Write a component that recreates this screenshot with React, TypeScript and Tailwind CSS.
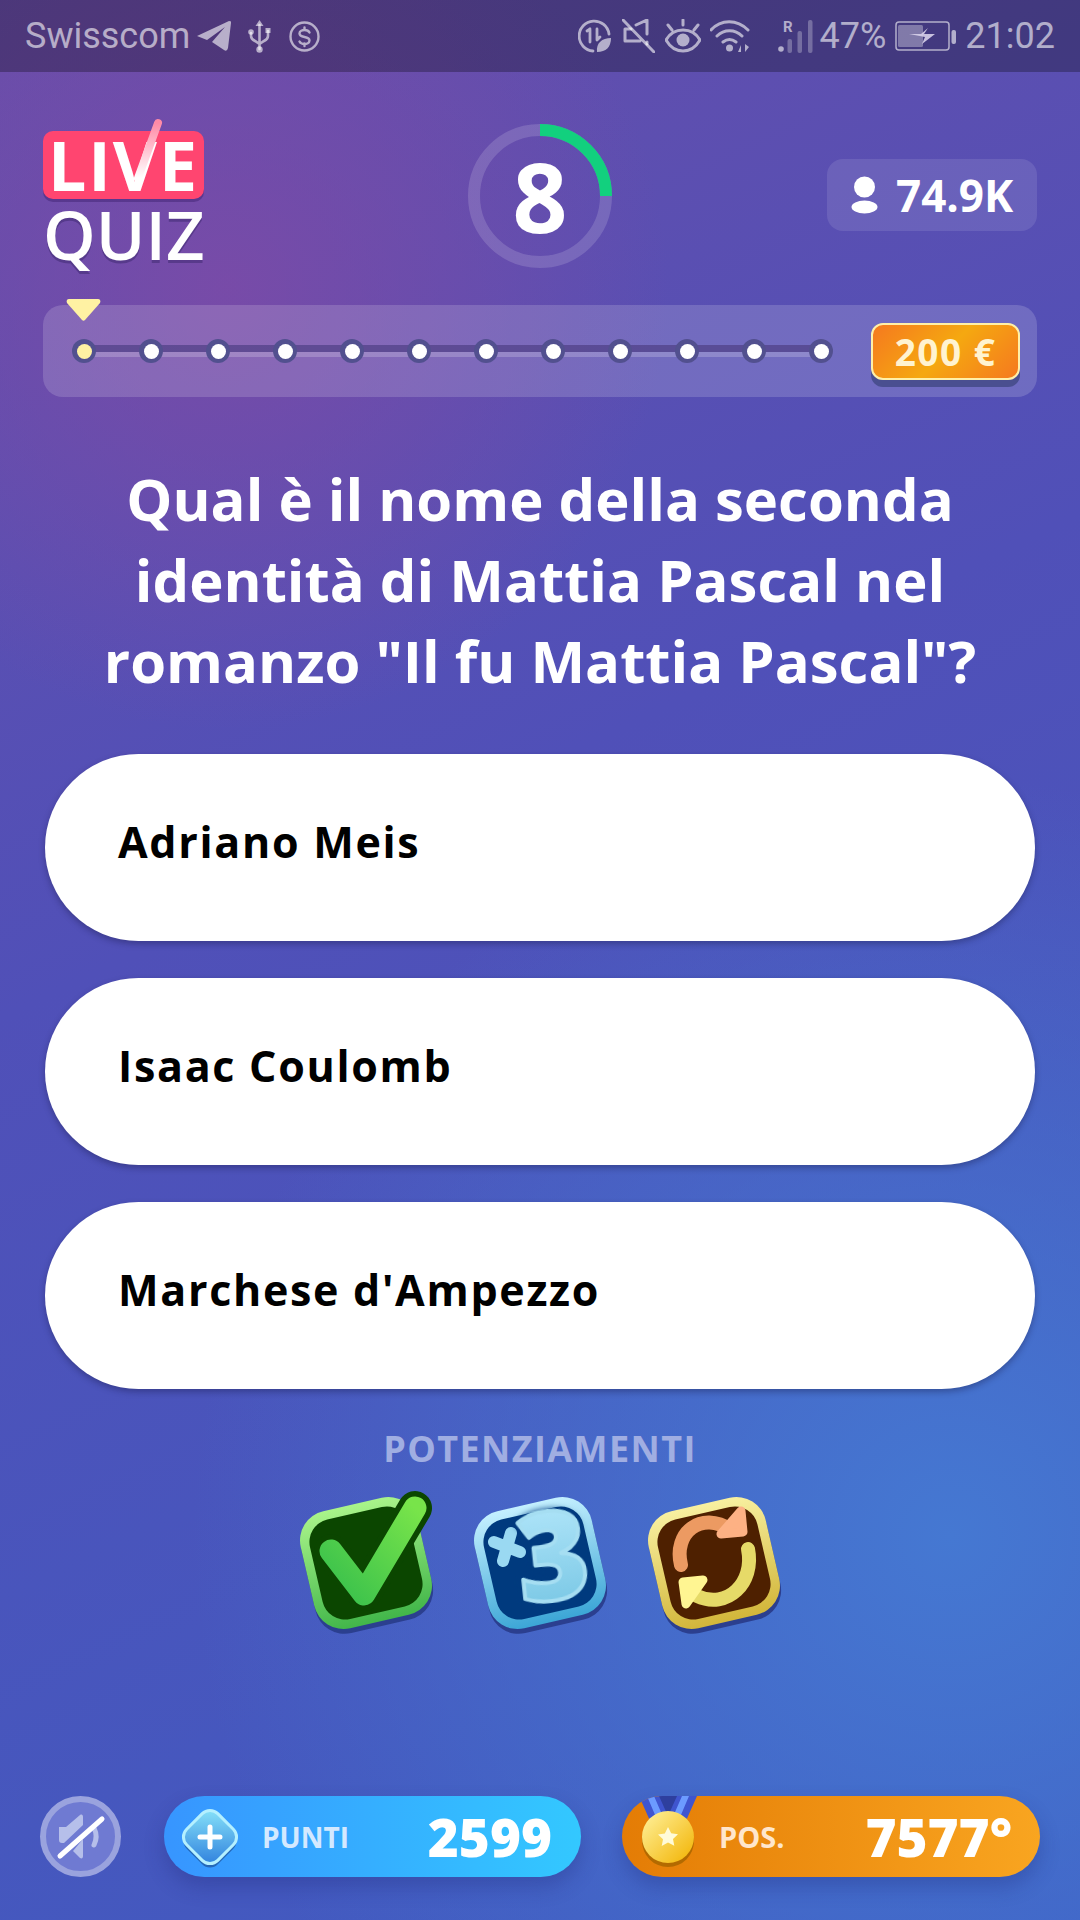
import React from 'react';

const answers = ['Adriano Meis', 'Isaac Coulomb', "Marchese d'Ampezzo"];
const dots = Array.from({ length: 12 }, (_, i) => i);

function Telegram() {
  return (
    <svg width="34" height="30" viewBox="0 0 34 30" fill="currentColor">
      <path d="M0 15 32 0Q35 0 34 2L31 27Q30 31 27 29L15 21 28 6 10 19Z" />
    </svg>
  );
}

function Usb() {
  return (
    <svg width="23" height="33" viewBox="0 0 23 33" fill="none" stroke="currentColor" strokeWidth="2.6" strokeLinecap="round">
      <path d="M11.500 5v24M3 13v3c0 3 2 4 4 5l4.500 3M20 11v5c0 3-2 4-4 5l-4.500 3" />
      <path d="M11.500 0 7.500 6h8z" fill="currentColor" stroke="none" />
      <circle cx="11.500" cy="29.500" r="3.200" fill="currentColor" stroke="none" />
      <circle cx="3" cy="12" r="2.800" fill="currentColor" stroke="none" />
      <rect x="17.500" y="8" width="5" height="5" fill="currentColor" stroke="none" />
    </svg>
  );
}

function Dollar() {
  return (
    <svg width="31" height="31" viewBox="0 0 31 31" fill="none" stroke="currentColor" strokeWidth="2.4" strokeLinecap="round">
      <circle cx="15.500" cy="15.500" r="14" />
      <path d="M20.500 11.500c-1-2-3-2.500-5-2.500s-5 1-5 3.500 2.500 3 5 3.500 5 1 5 3.500-3 3.500-5 3.500-4-.5-5-2.500M15.500 6.500v2.500M15.500 22.500v2.500" />
    </svg>
  );
}

function DataSaver() {
  return (
    <svg width="33" height="34" viewBox="0 0 33 34" fill="none" stroke="currentColor" strokeWidth="2.800" strokeLinecap="round">
      <path d="M15 32A15 15 0 1 1 31 15" />
      <path d="M12 10v13M9 12l3-2M19 10v11M19 21l3-3" />
      <path d="M19 33c-1-9 5-14 14-14 0 9-5 14-14 14z" fill="currentColor" stroke="none" />
    </svg>
  );
}

function Muted() {
  return (
    <svg width="33" height="34" viewBox="0 0 33 34" fill="none" stroke="currentColor" strokeWidth="3" strokeLinecap="round" strokeLinejoin="round">
      <path d="M9 10H3v12h7l8 0M14 6l11-5v14M25 23v2" />
      <path d="M1 1l31 32" />
    </svg>
  );
}

function Eye() {
  return (
    <svg width="36" height="34" viewBox="0 0 36 34" fill="none" stroke="currentColor" strokeWidth="3" strokeLinecap="round">
      <path d="M1 21c4-7 10-10 17-10s13 3 17 10c-4 7-10 11-17 11S5 28 1 21z" />
      <circle cx="18" cy="21" r="6.500" fill="currentColor" stroke="none" />
      <path d="M18 1v5M3 6l4 5M33 6l-4 5" />
    </svg>
  );
}

function Wifi() {
  return (
    <svg width="40" height="34" viewBox="0 0 40 34" fill="none" stroke="currentColor" strokeWidth="3" strokeLinecap="round">
      <path d="M1 11C11 0 27 0 38 11M7 17c7-7 18-7 25 0M13 23c4-3 9-3 13 0" />
      <circle cx="19.500" cy="29" r="3.500" fill="currentColor" stroke="none" />
      <path d="M28 33l3-7v7zM35 25v8l4-5z" fill="currentColor" stroke="none" />
    </svg>
  );
}

function Signal() {
  return (
    <svg width="35" height="35" viewBox="0 0 35 35" fill="currentColor">
      <text x="5" y="13" fontSize="15" fontWeight="700" fontFamily="Roboto, sans-serif">R</text>
      <circle cx="3" cy="30" r="2.800" />
      <rect x="9.500" y="20" width="4.500" height="14" rx="2" opacity="0.45" />
      <rect x="19.500" y="12" width="4.500" height="22" rx="2" opacity="0.45" />
      <rect x="30" y="1" width="4.500" height="33" rx="2" opacity="0.45" />
    </svg>
  );
}

function Battery() {
  return (
    <svg width="61" height="30" viewBox="0 0 61 30" fill="none">
      <rect x="1" y="1" width="53" height="28" rx="3" stroke="currentColor" strokeWidth="1.500" />
      <rect x="3" y="4" width="25" height="22" rx="1.500" fill="currentColor" opacity="0.55" />
      <rect x="56.500" y="9" width="4.500" height="14" rx="2" fill="currentColor" />
      <path d="M14 13h12l7-6-4 6h11l-13 10 3-7z" fill="#d7d0ea" opacity="0.9" />
    </svg>
  );
}

function StatusBar() {
  return (
    <div className="h-[72px] shrink-0 bg-black/[0.28] flex items-center justify-between pl-[25px] pr-[25px] text-white/60 font-['Roboto',sans-serif] text-[36px]">
      <div className="flex items-center">
        <span className="leading-none">Swisscom</span>
        <span className="ml-[7px]"><Telegram /></span>
        <span className="ml-[17px]"><Usb /></span>
        <span className="ml-[18px]"><Dollar /></span>
      </div>
      <div className="flex items-center">
        <DataSaver />
        <span className="ml-[11px]"><Muted /></span>
        <span className="ml-[10px]"><Eye /></span>
        <span className="ml-[9px]"><Wifi /></span>
        <span className="ml-[28px]"><Signal /></span>
        <span className="ml-[7px] leading-none">47%</span>
        <span className="ml-[9px]"><Battery /></span>
        <span className="ml-[9px] leading-none">21:02</span>
      </div>
    </div>
  );
}

function Logo() {
  return (
    <div className="relative w-[161px] h-[156px] mt-[-3px]">
      <div className="absolute left-0 top-[15px] w-[161px] h-[68px] rounded-[10px] bg-[#ff4570] shadow-[0_3px_0_rgba(70,40,120,0.55)] flex items-center justify-center text-white font-bold text-[68px] tracking-[2px] leading-none">
        LIVE
      </div>
      <svg className="absolute left-0 top-0" width="161" height="90" viewBox="0 0 161 90" fill="none">
        <defs>
          <linearGradient id="tick" x1="0" y1="1" x2="0" y2="0">
            <stop offset="0" stopColor="#ffffff" />
            <stop offset="1" stopColor="#ff8aa6" />
          </linearGradient>
        </defs>
        <path d="M95 62 115 7" stroke="url(#tick)" strokeWidth="8" strokeLinecap="round" />
      </svg>
      <div className="absolute left-0 top-[85px] w-[161px] h-[66px] text-center text-white font-semibold text-[67px] leading-[66px] [text-shadow:0_3px_0_rgba(60,40,110,0.5)]">
        QUIZ
      </div>
    </div>
  );
}

function Timer() {
  return (
    <div className="relative w-[144px] h-[144px] mt-[5px] flex items-center justify-center">
      <svg className="absolute inset-0" width="144" height="144" viewBox="0 0 144 144" fill="none">
        <circle cx="72" cy="72" r="66" stroke="white" strokeOpacity="0.15" strokeWidth="12" />
        <path d="M72 6A66 66 0 0 1 138 72" stroke="#12d07e" strokeWidth="12" />
      </svg>
      <span className="text-white font-bold text-[96px] leading-none">8</span>
    </div>
  );
}

function Viewers() {
  return (
    <div className="justify-self-end mt-[40px] w-[210px] h-[72px] rounded-[16px] bg-white/10 flex items-center pl-[24px]">
      <svg width="27" height="38" viewBox="0 0 27 38" fill="white">
        <circle cx="13.500" cy="11" r="10.500" />
        <ellipse cx="13.500" cy="31" rx="13" ry="6.500" />
      </svg>
      <span className="ml-[18px] text-white font-bold text-[44px] leading-none">74.9K</span>
    </div>
  );
}

function Progress() {
  return (
    <div className="relative mt-[30px] mx-[43px] h-[92px] rounded-[20px] bg-white/[0.16] flex items-center pl-[29px]">
      <svg className="absolute left-[23px] top-[-6px]" width="35" height="22" viewBox="0 0 35 22" fill="#fff2a3">
        <path d="M3 0h29c2 0 3 2 2 4L19 21c-1 1-2 1-3 0L1 4C0 2 1 0 3 0z" />
      </svg>
      <div className="relative w-[761px] flex items-center justify-between">
        <div className="absolute left-[12px] right-[12px] top-[6px] h-[12px] flex flex-col">
          <div className="h-[7px] bg-[#4f3f84]/70" />
          <div className="h-[5px] bg-white/20" />
        </div>
        {dots.map((i) => (
          <div key={i} className="relative w-[24px] h-[24px] rounded-full bg-[#52508f] flex items-center justify-center">
            <div className={i === 0 ? 'w-[15px] h-[15px] rounded-full bg-[#fff2a3]' : 'w-[15px] h-[15px] rounded-full bg-white'} />
          </div>
        ))}
      </div>
      <div className="ml-[38px] w-[149px] h-[57px] rounded-[12px] border-2 border-[#fff0a8] bg-[linear-gradient(135deg,#f5791f_0%,#f5a810_50%,#f5791f_100%)] shadow-[0_7px_0_#4a4f90] flex items-center justify-center text-[#fff3d0] font-bold text-[37px] tracking-[1.500px] leading-none">
        200 €
      </div>
    </div>
  );
}

function CheckPower() {
  return (
    <svg width="150" height="150" viewBox="0 0 150 150" fill="none">
      <defs>
        <linearGradient id="chkBorder" x1="0" y1="0" x2="0" y2="1">
          <stop offset="0" stopColor="#a9f48a" />
          <stop offset="1" stopColor="#42b64a" />
        </linearGradient>
        <linearGradient id="chkFill" x1="1" y1="0" x2="0" y2="1">
          <stop offset="0" stopColor="#78e44a" />
          <stop offset="1" stopColor="#38c04c" />
        </linearGradient>
      </defs>
      <g transform="rotate(-13 75 75)">
        <rect x="15" y="20" width="120" height="120" rx="30" fill="#2b3f8f" />
        <rect x="15" y="15" width="120" height="120" rx="30" fill="url(#chkBorder)" />
        <rect x="24" y="24" width="102" height="102" rx="23" fill="#0b4600" />
      </g>
      <path d="M40 63 73 106 124 20" stroke="#0b4600" strokeWidth="34" strokeLinecap="round" strokeLinejoin="round" />
      <path d="M40 63 73 106 124 20" stroke="url(#chkFill)" strokeWidth="23" strokeLinecap="round" strokeLinejoin="round" />
    </svg>
  );
}

function PlusThreePower() {
  return (
    <svg width="150" height="150" viewBox="0 0 150 150" fill="none">
      <defs>
        <linearGradient id="p3Border" x1="0" y1="0" x2="0" y2="1">
          <stop offset="0" stopColor="#c4f0ff" />
          <stop offset="1" stopColor="#3ca6d6" />
        </linearGradient>
        <linearGradient id="p3Fill" x1="0" y1="0" x2="0" y2="1">
          <stop offset="0" stopColor="#c0eeff" />
          <stop offset="1" stopColor="#6cc0e0" />
        </linearGradient>
      </defs>
      <g transform="rotate(-13 75 75)">
        <rect x="15" y="20" width="120" height="120" rx="30" fill="#2b3f8f" />
        <rect x="15" y="15" width="120" height="120" rx="30" fill="url(#p3Border)" />
        <rect x="24" y="24" width="102" height="102" rx="23" fill="#003a7e" />
      </g>
      <path d="M29 54 55 64M46 45 38 73" stroke="#9ad9f2" strokeWidth="12" strokeLinecap="round" />
      <g transform="rotate(-6 85 70)">
        <text x="52" y="112" fontFamily="'Open Sans', sans-serif" fontWeight="800" fontSize="122" fill="url(#p3Fill)" stroke="#a6def2" strokeWidth="4" strokeLinejoin="round" className="[filter:drop-shadow(0_0_3px_#003a7e)]">3</text>
      </g>
    </svg>
  );
}

function SwapPower() {
  return (
    <svg width="150" height="150" viewBox="0 0 150 150" fill="none">
      <defs>
        <linearGradient id="swBorder" x1="0" y1="0" x2="0" y2="1">
          <stop offset="0" stopColor="#f8f0a0" />
          <stop offset="1" stopColor="#d2b63a" />
        </linearGradient>
      </defs>
      <g transform="rotate(-13 75 75)">
        <rect x="15" y="20" width="120" height="120" rx="30" fill="#2b3f8f" />
        <rect x="15" y="15" width="120" height="120" rx="30" fill="url(#swBorder)" />
        <rect x="24" y="24" width="102" height="102" rx="23" fill="#4e2000" />
      </g>
      <path d="M42 77C34 45 62 22 92 42" stroke="#ec9a62" strokeWidth="14" strokeLinecap="round" />
      <path d="M102 23 104 44 82 46Z" fill="#fdb184" stroke="#fdb184" strokeWidth="9" strokeLinejoin="round" />
      <path d="M109 61C116 95 88 122 58 108" stroke="#e6da68" strokeWidth="14" strokeLinecap="round" />
      <path d="M64 92 44 94 47 116Z" fill="#fff592" stroke="#fff592" strokeWidth="9" strokeLinejoin="round" />
    </svg>
  );
}

function MuteButton() {
  return (
    <div className="w-[81px] h-[81px] rounded-full border-[6px] border-[#9aa3de] bg-[#6f7ad2] flex items-center justify-center">
      <svg width="50" height="50" viewBox="0 0 50 50" fill="none">
        <path d="M3 15h7L24 3c2-1 3 0 3 2v8L8 31H6c-2 0-3-1-3-3z" fill="#b6bfea" />
        <path d="M27 27v17c0 2-1 3-3 2l-7-7z" fill="#b6bfea" />
        <path d="M38 16c3 6 3 11 0 17" stroke="#b6bfea" strokeWidth="5" strokeLinecap="round" />
        <path d="M4 44 46 7" stroke="white" strokeWidth="5" strokeLinecap="round" />
      </svg>
    </div>
  );
}

function Gem() {
  return (
    <svg className="mt-[8px]" width="58" height="66" viewBox="0 0 58 66" fill="none">
      <defs>
        <linearGradient id="gem" x1="0" y1="0" x2="1" y2="1">
          <stop offset="0" stopColor="#8ce8fb" />
          <stop offset="1" stopColor="#2a7bdc" />
        </linearGradient>
      </defs>
      <rect x="7" y="11" width="44" height="44" rx="11" transform="rotate(45 29 33)" fill="#2468b8" />
      <rect x="7" y="7" width="44" height="44" rx="11" transform="rotate(45 29 29)" fill="url(#gem)" stroke="#b4f0ff" strokeWidth="3" />
      <path d="M29 19v20M19 29h20" stroke="white" strokeWidth="5" strokeLinecap="round" />
    </svg>
  );
}

function Medal() {
  return (
    <svg width="70" height="78" viewBox="0 0 70 78" fill="none">
      <defs>
        <linearGradient id="medal" x1="0" y1="0" x2="1" y2="1">
          <stop offset="0" stopColor="#fff3a0" />
          <stop offset="1" stopColor="#f2b200" />
        </linearGradient>
      </defs>
      <path d="M6 0h24l12 30-20 6zM64 0H40L28 30l20 6z" fill="#3f55cf" />
      <path d="M14 0h7l13 30-6 3zM56 0h-7L36 30l6 3z" fill="#6c9bff" />
      <path d="M26 0h18l-9 20z" fill="#2e3f9e" />
      <circle cx="35" cy="45" r="26" fill="#b36a00" />
      <circle cx="35" cy="41" r="26" fill="url(#medal)" />
      <path d="M35 31l3.200 6.200 6.800 1-5 4.800 1.300 6.800L35 46.600 28.700 50 30 43.200l-5-4.800 6.800-1z" fill="#fffbd8" />
    </svg>
  );
}

export default function App() {
  return (
    <div className="relative w-[1080px] h-[1920px] overflow-hidden flex flex-col font-['Open_Sans',sans-serif] bg-[radial-gradient(circle_at_21%_15%,rgba(126,74,166,0.8)_0%,rgba(124,74,166,0)_24%),radial-gradient(circle_at_88%_80%,#4578d2_0%,rgba(69,120,210,0)_42%),linear-gradient(155deg,#674eaa_0%,#5050b8_42%,#3f5cc2_100%)]">
      <StatusBar />

      <div className="mt-[47px] px-[43px] h-[156px] grid grid-cols-[1fr_auto_1fr] items-start">
        <Logo />
        <Timer />
        <Viewers />
      </div>

      <Progress />

      <h1 className="mt-[61px] text-center text-white font-bold text-[58px] leading-[81px]">
        Qual è il nome della seconda
        <br />
        identità di Mattia Pascal nel
        <br />
        romanzo "Il fu Mattia Pascal"?
      </h1>

      <div className="mt-[53px] mx-[45px] flex flex-col gap-[37px]">
        {answers.map((a) => (
          <div
            key={a}
            className="h-[187px] rounded-full bg-white shadow-[0_3px_6px_rgba(20,20,60,0.35)] flex items-center pl-[73px] pb-[12px] text-black font-bold text-[43px] tracking-[1.700px]"
          >
            <span className="leading-[60px]">{a}</span>
          </div>
        ))}
      </div>

      <div className="mt-[40px] text-center text-[#a0aee2] font-bold text-[36px] leading-[40px] tracking-[1.400px]">POTENZIAMENTI</div>

      <div className="mt-[19px] flex justify-center gap-[24px]">
        <CheckPower />
        <PlusThreePower />
        <SwapPower />
      </div>

      <div className="mt-auto mb-[43px] pl-[40px] flex items-center">
        <MuteButton />
        <div className="ml-[43px] w-[417px] h-[81px] rounded-full bg-[linear-gradient(90deg,#3795ff,#33c8ff)] shadow-[0_10px_20px_rgba(30,40,120,0.3)] flex items-center pl-[17px] pr-[29px]">
          <Gem />
          <span className="ml-[23px] text-[#d4e9ff] font-bold text-[28px] leading-none">PUNTI</span>
          <span className="ml-auto text-white font-extrabold text-[53px] leading-none">2599</span>
        </div>
        <div className="relative ml-[41px] w-[418px] h-[81px] rounded-full overflow-hidden bg-[linear-gradient(90deg,#e47c05,#f9a520)] shadow-[0_10px_20px_rgba(30,40,120,0.3)] flex items-center pl-[97px] pr-[28px]">
          <div className="absolute left-[11px] top-0">
            <Medal />
          </div>
          <span className="text-[#ffe6cc] font-bold text-[29px] leading-none">POS.</span>
          <span className="ml-auto text-white font-extrabold text-[53px] leading-none">7577°</span>
        </div>
      </div>
    </div>
  );
}
